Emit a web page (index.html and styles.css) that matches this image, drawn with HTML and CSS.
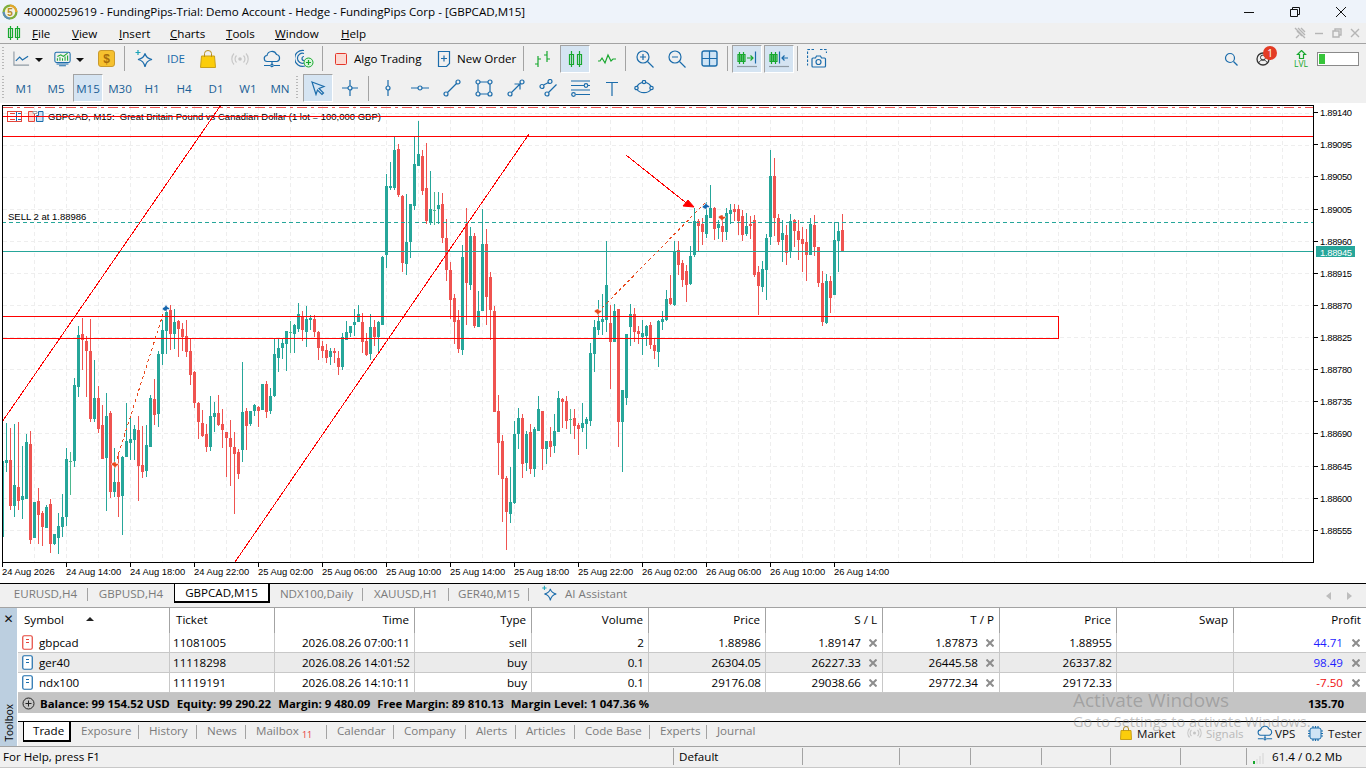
FILE: index.html
```html
<!DOCTYPE html>
<html lang="en">
<head>
    <meta charset="UTF-8">
    <title>40000259619 - FundingPips-Trial: Demo Account - Hedge - FundingPips Corp - [GBPCAD,M15]</title>
    <link rel="stylesheet" href="styles.css">
</head>
<body>
    <div class="title-bar">
        <svg class="app-logo" width="16" height="16" viewBox="0 0 16 16">
            <circle cx="8" cy="8" r="7.5" fill="#7fae3c"/>
            <path d="M8 .5A7.5 7.5 0 0 1 15.5 8L8 8z" fill="#e2a72e"/>
            <path d="M.5 8A7.5 7.5 0 0 0 8 15.5L8 8z" fill="#5b8fb5"/>
            <circle cx="8" cy="8" r="5.2" fill="#f4f1df"/>
            <text x="8" y="12" text-anchor="middle" class="logo-five">5</text>
        </svg>
        <span class="title-text">40000259619 - FundingPips-Trial: Demo Account - Hedge - FundingPips Corp - [GBPCAD,M15]</span>
        <div class="win-buttons">
            <svg width="12" height="12" viewBox="0 0 12 12"><path class="win-ic" d="M1 6.5h10"/></svg>
            <svg width="12" height="12" viewBox="0 0 12 12"><path class="win-ic" d="M1.5 3.5h7v7h-7zM3.5 3.5v-2h7v7h-2"/></svg>
            <svg width="12" height="12" viewBox="0 0 12 12"><path class="win-ic" d="M1 1l10 10M11 1L1 11"/></svg>
        </div>
    </div>

    <div class="menu-bar">
        <svg class="menu-logo" width="14" height="16" viewBox="0 0 14 16"><path class="ic-g" d="M3.5 1v14M10.5 1v14"/><path class="ic-g" d="M1.5 3.5h4v9h-4zM8.5 3.5h4v9h-4z"/></svg>
        <div class="menu-list">
            <span><u>F</u>ile</span>
            <span><u>V</u>iew</span>
            <span><u>I</u>nsert</span>
            <span><u>C</u>harts</span>
            <span><u>T</u>ools</span>
            <span><u>W</u>indow</span>
            <span><u>H</u>elp</span>
        </div>
        <div class="doc-buttons">
            <svg width="12" height="12" viewBox="0 0 12 12"><path class="doc-ic" d="M4 1l7 7M2 11l3-3M3 4l5 5M7 1l4 4M1 1l10 10"/></svg>
            <svg width="10" height="12" viewBox="0 0 10 12"><path class="doc-ic" d="M1 6.5h8"/></svg>
            <svg width="10" height="12" viewBox="0 0 10 12"><path class="doc-ic" d="M1 4h6v6H1zM3 4V2h6v6H7"/></svg>
            <svg width="10" height="12" viewBox="0 0 10 12"><path class="doc-ic" d="M1 2l8 8M9 2l-8 8"/></svg>
        </div>
    </div>

    <div class="toolbar">
        <span class="grip"></span>
        <button class="tb tb-caret">
            <svg width="18" height="18" viewBox="0 0 18 18"><path class="ic-gray" d="M1 1v14.5h16"/><path class="ic" d="M3 11l4-4 3 3 6-4"/></svg>
            <i class="caret"></i>
        </button>
        <button class="tb tb-caret">
            <svg width="20" height="20" viewBox="0 0 20 20"><rect class="ic" x="1" y="2" width="18" height="12" rx="2"/><path class="ic-g" d="M4 12V9M7 12V8M10 12V9M13 12V7M16 12V6M4 7l4-2 3 2 5-4"/><path class="ic" d="M3 16h14M6 18h8"/></svg>
            <i class="caret"></i>
        </button>
        <button class="tb">
            <svg width="17" height="17" viewBox="0 0 17 17"><rect x=".5" y=".5" width="16" height="16" rx="2.5" fill="#f6c12f" stroke="#c99a2e"/><text x="8.5" y="13" text-anchor="middle" class="dollar">$</text></svg>
        </button>
        <span class="sep"></span>
        <button class="tb">
            <svg width="20" height="20" viewBox="0 0 20 20"><path class="ic" d="M11 4.500c.8 3.4 2.800 5.200 7 6-4.200.8-6.200 2.800-7 7.500-.8-4.700-2.800-6.700-7-7.500 4.200-.8 6.200-2.600 7-6z"/><path class="ic-t" d="M4 1v5M1.500 3.500h5"/></svg>
        </button>
        <button class="tb tb-ide">IDE</button>
        <button class="tb">
            <svg width="16" height="18" viewBox="0 0 16 18"><path d="M1.500 6h13l1 11.500H.5z" fill="#fbcd0b" stroke="#c8a01a"/><path d="M4.500 7V3.500a3.500 3 0 0 1 7 0V7" fill="none" stroke="#b88f1c"/></svg>
        </button>
        <button class="tb">
            <svg width="18" height="12" viewBox="0 0 18 12"><circle cx="9" cy="6" r="1.800" fill="#c4c4c4"/><path class="ic-light" d="M5.500 2.500a5 5 0 0 0 0 7M12.500 2.500a5 5 0 0 1 0 7M3 .5a8 8 0 0 0 0 11M15 .5a8 8 0 0 1 0 11"/></svg>
        </button>
        <button class="tb">
            <svg width="18" height="18" viewBox="0 0 18 18"><path class="ic" d="M4.500 11.500a3 3 0 0 1-.5-6 5 5 0 0 1 9.500-1 3.600 3.600 0 0 1 .5 7z"/><path class="ic" d="M9 11.500v3M1 15.500h6M11 15.500h6"/><circle class="ic" cx="9" cy="15.500" r="1.200"/></svg>
        </button>
        <button class="tb">
            <svg width="19" height="19" viewBox="0 0 19 19"><path class="ic" d="M9 1.500a8 8 0 1 0 1 15.500M9 4.500a5 5 0 1 0 0 9.500M9 7.500a2 2 0 1 0 0 4"/><circle cx="13.500" cy="13.500" r="4.500" fill="#d9f5dc" stroke="#18a82f"/><path class="ic-g" d="M13.500 11v5M11 13.500h5"/></svg>
        </button>
        <span class="sep"></span>
        <button class="tb tb-text tb-algo">
            <svg width="12" height="12" viewBox="0 0 12 12"><rect x=".5" y=".5" width="11" height="11" rx="1" fill="#fbd9d2" stroke="#e5362a"/></svg>
            Algo Trading
        </button>
        <button class="tb tb-text tb-order">
            <svg width="14" height="16" viewBox="0 0 14 16"><path class="ic" d="M1.500.5h11v12l-3 3h-8z"/><path class="ic" d="M7 4.500v6M4 7.500h6"/></svg>
            New Order
        </button>
        <span class="sep"></span>
        <button class="tb">
            <svg width="18" height="18" viewBox="0 0 18 18"><path class="ic-g" d="M4 6v11M1 14h3M4 9h3M13 1v11M10 5h3M13 9h3"/></svg>
        </button>
        <button class="tb on">
            <svg width="15" height="18" viewBox="0 0 15 18"><path class="ic-g" d="M3.500 1v16M11.500 1v16M1.500 4.500h4v10h-4zM9.500 4.500h4v10h-4z"/></svg>
        </button>
        <button class="tb">
            <svg width="18" height="12" viewBox="0 0 18 12"><path class="ic-g" d="M0 8h2l2-3 3 5 3-8 3 6 2-2h3"/></svg>
        </button>
        <span class="sep"></span>
        <button class="tb">
            <svg width="18" height="18" viewBox="0 0 18 18"><circle class="ic" cx="7" cy="7" r="6"/><path class="ic" d="M11.500 11.500l6 6M4 7h6M7 4v6"/></svg>
        </button>
        <button class="tb">
            <svg width="18" height="18" viewBox="0 0 18 18"><circle class="ic" cx="7" cy="7" r="6"/><path class="ic" d="M11.500 11.500l6 6M4 7h6"/></svg>
        </button>
        <button class="tb">
            <svg width="17" height="17" viewBox="0 0 17 17"><rect x="1" y="1" width="15" height="15" rx="2" fill="#cfe4f5" stroke="#1b6cab" stroke-width="1.400"/><path class="ic" d="M8.500 1v15M1 8.500h15"/></svg>
        </button>
        <span class="sep"></span>
        <button class="tb on">
            <svg width="20" height="18" viewBox="0 0 20 18"><path class="ic-g" d="M2.500 2v12M6.500 2v12M1 4.500h3v7H1zM5 4.500h3v7H5zM10 8h6M13.500 5.500L16 8l-2.500 2.500"/><path class="ic" d="M18.500 1.500v12"/><path class="ic-gray" d="M0 16.500h20"/></svg>
        </button>
        <button class="tb on">
            <svg width="20" height="18" viewBox="0 0 20 18"><path class="ic-g" d="M2.500 2v12M6.500 2v12M1 4.500h3v7H1zM5 4.500h3v7H5z"/><path class="ic" d="M10.500 1.500v12M13 8h6M15.500 5.500L13 8l2.500 2.500"/><path class="ic-gray" d="M0 16.500h20"/></svg>
        </button>
        <span class="sep"></span>
        <button class="tb">
            <svg width="20" height="19" viewBox="0 0 20 19"><path class="ic ic-dash" d="M7 .5H1.500a1 1 0 0 0-1 1v15M13 .5h5.500a1 1 0 0 1 1 1V4"/><path class="ic" d="M6 9h2.500l1-2h4l1 2h3a1 1 0 0 1 1 1v7a1 1 0 0 1-1 1H6a1 1 0 0 1-1-1v-7a1 1 0 0 1 1-1z"/><circle class="ic" cx="11.500" cy="13" r="2.500"/></svg>
        </button>

        <div class="tray">
            <svg width="14" height="14" viewBox="0 0 14 14"><circle class="ic" cx="6" cy="6" r="4.500"/><path class="ic" d="M9.500 9.500l4 4"/></svg>
            <div class="user">
                <svg width="14" height="14" viewBox="0 0 14 14"><circle cx="7" cy="7" r="6" fill="none" stroke="#333" stroke-width="1.300"/><circle cx="7" cy="5.500" r="2.500" fill="none" stroke="#333"/><path d="M2.500 11c1-2 2.500-3 4.500-3s3.500 1 4.500 3" fill="none" stroke="#333"/></svg>
                <span class="badge">1</span>
            </div>
            <div class="lvl">
                <svg width="11" height="9" viewBox="0 0 11 9"><path class="ic-g" d="M5.500 .5l4 4H7.500V8.500h-4V4.500H1.500z"/></svg>
                <span>LVL</span>
            </div>
            <div class="level-bar"><span class="level-fill"></span></div>
        </div>
    </div>

    <div class="toolbar toolbar-two">
        <span class="grip"></span>
        <button class="tb tf">M1</button>
        <button class="tb tf">M5</button>
        <button class="tb tf on">M15</button>
        <button class="tb tf">M30</button>
        <button class="tb tf">H1</button>
        <button class="tb tf">H4</button>
        <button class="tb tf">D1</button>
        <button class="tb tf">W1</button>
        <button class="tb tf">MN</button>
        <span class="grip"></span>
        <button class="tb on">
            <svg width="16" height="16" viewBox="0 0 16 16"><path class="ic" d="M2 2l12 4.500-5 2 4.500 4.500-1.500 1.500L7.500 10l-1.500 4.500z"/></svg>
        </button>
        <button class="tb">
            <svg width="18" height="18" viewBox="0 0 18 18"><circle class="ic" cx="9" cy="9" r="2"/><path class="ic" d="M9 1v6M9 11v6M1 9h6M11 9h6"/></svg>
        </button>
        <span class="sep"></span>
        <button class="tb">
            <svg width="8" height="18" viewBox="0 0 8 18"><circle class="ic" cx="4" cy="9" r="2"/><path class="ic" d="M4 1v6M4 11v6"/></svg>
        </button>
        <button class="tb">
            <svg width="18" height="8" viewBox="0 0 18 8"><circle class="ic" cx="9" cy="4" r="2"/><path class="ic" d="M0 4h7M11 4h7"/></svg>
        </button>
        <button class="tb">
            <svg width="18" height="18" viewBox="0 0 18 18"><circle class="ic" cx="3" cy="15" r="2"/><circle class="ic" cx="15" cy="3" r="2"/><path class="ic" d="M4.500 13.500l9-9"/></svg>
        </button>
        <button class="tb">
            <svg width="18" height="18" viewBox="0 0 18 18"><circle class="ic" cx="3" cy="3" r="2"/><circle class="ic" cx="15" cy="3" r="2"/><circle class="ic" cx="3" cy="15" r="2"/><circle class="ic" cx="15" cy="15" r="2"/><path class="ic" d="M5 3h8M5 15h8M3 5v8M15 5v8"/></svg>
        </button>
        <button class="tb">
            <svg width="18" height="18" viewBox="0 0 18 18"><circle class="ic" cx="3" cy="15" r="2"/><circle class="ic" cx="15" cy="3" r="2"/><path class="ic" d="M4.500 13.500l9-9M7.500 5h5.500v5.500"/></svg>
        </button>
        <button class="tb">
            <svg width="19" height="18" viewBox="0 0 19 18"><circle class="ic" cx="3" cy="7.500" r="2"/><circle class="ic" cx="11" cy="2.500" r="2"/><circle class="ic" cx="8" cy="15" r="2"/><path class="ic" d="M4.500 6l5-2.500M9.500 13.500l8-8"/></svg>
        </button>
        <button class="tb">
            <svg width="19" height="18" viewBox="0 0 19 18"><path class="ic" d="M0 2h19M0 6.500h13M17 6.500h2M0 11h19M5 15.500h14"/><circle class="ic" cx="15" cy="6.500" r="1.800"/><circle class="ic" cx="2.500" cy="15.500" r="1.800"/></svg>
        </button>
        <button class="tb">
            <svg width="14" height="15" viewBox="0 0 14 15"><path class="ic" d="M1 1.500h12M7 1.500V15"/></svg>
        </button>
        <button class="tb">
            <svg width="20" height="16" viewBox="0 0 20 16"><path class="ic" d="M3 6.500a8 6 0 0 1 5-4M12 2.500a8 6 0 0 1 5 4M17 9.500a8 6 0 0 1-14 0"/><circle class="ic" cx="10" cy="2" r="1.700"/><circle class="ic" cx="2.500" cy="8" r="1.700"/><circle class="ic" cx="17.500" cy="8" r="1.700"/></svg>
        </button>
    </div>

    <div class="chart-area">
        <svg id="chart" class="chart" width="1366" height="480" viewBox="0 103 1366 480">
            <defs>
                <clipPath id="plot"><rect x="3" y="106" width="1310" height="456"/></clipPath>
            </defs>
            <g id="grid" class="grid"></g>
            <g class="legend">
                <text x="48" y="120">GBPCAD, M15:  Great Britain Pound vs Canadian Dollar (1 lot = 100,000 GBP)</text>
                <text x="8" y="220">SELL 2 at 1.88986</text>
            </g>
            <g class="legend-icons">
                <rect x="7.500" y="111.500" width="14" height="10" fill="#fff" stroke="#e5453a"/>
                <path d="M10 113.500h5M10 116.500h5M10 119.500h5" stroke="#e5453a"/>
                <path d="M16.500 112v9M18 113.500h3M18 116.500h3M18 119.500h3" stroke="#1b6cab"/>
                <path d="M28.500 111.500h5l1 2v8h-6z" fill="#fbd9d2" stroke="#e5453a"/>
                <path d="M36.500 115.500h2v-4h4.500v10h-6.500z" fill="#cfe4f5" stroke="#1b6cab"/>
                <path d="M33 111.500h4v2h-4z" fill="#fff" stroke="#a0a0a0"/>
            </g>
            <g id="candles" clip-path="url(#plot)"></g>
            <g id="objects" clip-path="url(#plot)"></g>
            <g id="markers"></g>
            <path class="frame" d="M2.500 105.500H1313.500V562.500H2.500z"/>
            <g id="ticks" class="frame"></g>
            <g class="axis price-axis">
                <text x="1320" y="116">1.89140</text>
                <text x="1320" y="148">1.89095</text>
                <text x="1320" y="180">1.89050</text>
                <text x="1320" y="213">1.89005</text>
                <text x="1320" y="245">1.88960</text>
                <text x="1320" y="277">1.88915</text>
                <text x="1320" y="309">1.88870</text>
                <text x="1320" y="341">1.88825</text>
                <text x="1320" y="373">1.88780</text>
                <text x="1320" y="405">1.88735</text>
                <text x="1320" y="437">1.88690</text>
                <text x="1320" y="470">1.88645</text>
                <text x="1320" y="502">1.88600</text>
                <text x="1320" y="534">1.88555</text>
                <rect class="bid-box" x="1316" y="246" width="39" height="11"/>
                <text class="bid-text" x="1320" y="256">1.88945</text>
            </g>
            <g class="axis">
                <text x="2" y="575">24 Aug 2026</text>
                <text x="66" y="575">24 Aug 14:00</text>
                <text x="130" y="575">24 Aug 18:00</text>
                <text x="194" y="575">24 Aug 22:00</text>
                <text x="258" y="575">25 Aug 02:00</text>
                <text x="322" y="575">25 Aug 06:00</text>
                <text x="386" y="575">25 Aug 10:00</text>
                <text x="450" y="575">25 Aug 14:00</text>
                <text x="514" y="575">25 Aug 18:00</text>
                <text x="578" y="575">25 Aug 22:00</text>
                <text x="642" y="575">26 Aug 02:00</text>
                <text x="706" y="575">26 Aug 06:00</text>
                <text x="770" y="575">26 Aug 10:00</text>
                <text x="834" y="575">26 Aug 14:00</text>
            </g>
        </svg>
    </div>

    <div class="chart-tabs">
        <span class="chart-tab">EURUSD,H4</span>
        <span class="chart-tab no-sep">GBPUSD,H4</span>
        <span class="chart-tab active">GBPCAD,M15</span>
        <span class="chart-tab">NDX100,Daily</span>
        <span class="chart-tab">XAUUSD,H1</span>
        <span class="chart-tab">GER40,M15</span>
        <span class="chart-tab no-sep ai-tab">
            <svg width="17" height="17" viewBox="0 0 20 20"><path class="ic" d="M11 4.500c.8 3.400 2.800 5.200 7 6-4.200.8-6.200 2.800-7 7.500-.8-4.700-2.800-6.700-7-7.500 4.200-.8 6.200-2.600 7-6z"/><path class="ic-t" d="M4 1v5M1.500 3.500h5"/></svg>
            AI Assistant
        </span>
        <div class="tab-arrows">
            <svg width="5" height="8" viewBox="0 0 5 8"><path d="M5 0v8L0 4z"/></svg>
            <svg width="5" height="8" viewBox="0 0 5 8"><path d="M0 0v8l5-4z"/></svg>
        </div>
    </div>

    <svg class="defs" width="0" height="0">
        <symbol id="close-x" viewBox="0 0 8 8"><path d="M.5.5l7 7M7.500.5l-7 7" stroke="#8d8d8d" stroke-width="2" fill="none"/></symbol>
        <symbol id="pos-sell" viewBox="0 0 11 15"><rect x=".75" y=".75" width="9.500" height="13.500" rx="1.500" fill="#fff" stroke="#e5453a" stroke-width="1.200"/><path d="M4 4.500h3M4 7.500h3" stroke="#e5453a"/></symbol>
        <symbol id="pos-buy" viewBox="0 0 11 15"><rect x=".75" y=".75" width="9.500" height="13.500" rx="1.500" fill="#fff" stroke="#1b6cab" stroke-width="1.200"/><path d="M4 4.500h3M4 7.500h3" stroke="#1b6cab"/></symbol>
    </svg>

    <div class="toolbox">
        <div class="toolbox-strip">
            <span class="strip-x">✕</span>
            <span class="strip-label">Toolbox</span>
        </div>
        <div class="toolbox-main">
            <div class="row head">
                <span class="left">Symbol<i class="sort"></i></span>
                <span class="left">Ticket</span>
                <span>Time</span><span>Type</span><span>Volume</span><span>Price</span>
                <span>S / L</span><span>T / P</span><span>Price</span><span>Swap</span><span>Profit</span>
            </div>
            <div class="row">
                <span class="sym"><svg width="11" height="15"><use href="#pos-sell"/></svg>gbpcad</span>
                <span class="ticket">11081005</span>
                <span>2026.08.26 07:00:11</span><span>sell</span><span>2</span><span>1.88986</span>
                <span>1.89147<svg class="x"><use href="#close-x"/></svg></span>
                <span>1.87873<svg class="x"><use href="#close-x"/></svg></span>
                <span>1.88955</span><span></span>
                <span class="pos-val">44.71<svg class="x"><use href="#close-x"/></svg></span>
            </div>
            <div class="row alt">
                <span class="sym"><svg width="11" height="15"><use href="#pos-buy"/></svg>ger40</span>
                <span class="ticket">11118298</span>
                <span>2026.08.26 14:01:52</span><span>buy</span><span>0.1</span><span>26304.05</span>
                <span>26227.33<svg class="x"><use href="#close-x"/></svg></span>
                <span>26445.58<svg class="x"><use href="#close-x"/></svg></span>
                <span>26337.82</span><span></span>
                <span class="pos-val">98.49<svg class="x"><use href="#close-x"/></svg></span>
            </div>
            <div class="row">
                <span class="sym"><svg width="11" height="15"><use href="#pos-buy"/></svg>ndx100</span>
                <span class="ticket">11119191</span>
                <span>2026.08.26 14:10:11</span><span>buy</span><span>0.1</span><span>29176.08</span>
                <span>29038.66<svg class="x"><use href="#close-x"/></svg></span>
                <span>29772.34<svg class="x"><use href="#close-x"/></svg></span>
                <span>29172.33</span><span></span>
                <span class="neg-val">-7.50<svg class="x"><use href="#close-x"/></svg></span>
            </div>
            <div class="summary">
                <svg width="13" height="13" viewBox="0 0 13 13"><circle cx="6.500" cy="6.500" r="5.500" fill="none" stroke="#222"/><path d="M3.500 6.500h6M6.500 3.500v6" stroke="#222"/></svg>
                <b>Balance: 99 154.52 USD</b>
                <b>Equity: 99 290.22</b>
                <b>Margin: 9 480.09</b>
                <b>Free Margin: 89 810.13</b>
                <b>Margin Level: 1 047.36 %</b>
                <b class="total">135.70</b>
            </div>
            <div class="bottom-tabs">
                <span class="bottom-tab active">Trade</span>
                <span class="bottom-tab">Exposure</span>
                <span class="bottom-tab">History</span>
                <span class="bottom-tab">News</span>
                <span class="bottom-tab">Mailbox<sub>11</sub></span>
                <span class="bottom-tab">Calendar</span>
                <span class="bottom-tab">Company</span>
                <span class="bottom-tab">Alerts</span>
                <span class="bottom-tab">Articles</span>
                <span class="bottom-tab">Code Base</span>
                <span class="bottom-tab">Experts</span>
                <span class="bottom-tab no-sep">Journal</span>
                <div class="tools-right">
                    <span class="tool-link">
                        <svg width="12" height="14" viewBox="0 0 12 14"><path d="M1 4.500h10l.5 9H.5z" fill="#fbcd0b" stroke="#c8a01a"/><path d="M3.500 5V3a2.500 2.500 0 0 1 5 0v2" fill="none" stroke="#b88f1c"/></svg>
                        Market
                    </span>
                    <span class="tool-link muted">
                        <svg width="15" height="10" viewBox="0 0 15 10"><circle cx="7.500" cy="5" r="1.500" fill="#c4c4c4"/><path class="ic-light" d="M4.500 2a4 4 0 0 0 0 6M10.500 2a4 4 0 0 1 0 6M2.500 .5a7 7 0 0 0 0 9M12.500 .5a7 7 0 0 1 0 9"/></svg>
                        Signals
                    </span>
                    <span class="tool-link tool-vps">
                        <svg width="18" height="16" viewBox="0 0 18 18"><path class="ic" d="M4.500 11.500a3 3 0 0 1-.5-6 5 5 0 0 1 9.500-1 3.600 3.600 0 0 1 .5 7z"/><path class="ic" d="M9 11.500v3M1 15.500h6M11 15.500h6"/><circle class="ic" cx="9" cy="15.500" r="1.200"/></svg>
                        VPS
                    </span>
                    <span class="tool-link">
                        <svg width="15" height="15" viewBox="0 0 15 15"><rect x="2" y="2" width="11" height="11" rx="2" fill="#cfe4f5" stroke="#1b6cab"/><path class="ic" d="M5 0v2M7.500 0v2M10 0v2M5 13v2M7.500 13v2M10 13v2M0 5h2M0 7.500h2M0 10h2M13 5h2M13 7.500h2M13 10h2"/></svg>
                        Tester
                    </span>
                </div>
            </div>
        </div>
    </div>

    <div class="status-bar">
        <span>For Help, press F1</span>
        <span class="with-line">Default</span>
        <span class="with-line"></span>
        <span class="with-line"></span>
        <span class="with-line"></span>
        <span class="with-line"></span>
        <span class="with-line"></span>
        <span class="with-line"></span>
        <span class="with-line conn">
            <svg width="14" height="14" viewBox="0 0 14 14">
                <path d="M1 11h2v3H1z" fill="#19a82f"/>
                <path d="M4 9h2v5H4zM7 6h2v8H7zM10 3h2v11h-2z" fill="#e2e2e2"/>
            </svg>
            61.4 / 0.2 Mb
        </span>
    </div>

    <div class="watermark">
        <div class="wm-big">Activate Windows</div>
        <div class="wm-small">Go to Settings to activate Windows.</div>
    </div>

    <script src="chart.js"></script>
</body>
</html>
```

FILE: styles.css
```css
* {
    margin: 0;
    padding: 0;
    box-sizing: border-box;
}

body {
    width: 1366px;
    height: 768px;
    overflow: hidden;
    position: relative;
    background: #f0f0f0;
    color: #000;
    font-family: "Open Sans", "Noto Sans", sans-serif;
    font-size: 11.6px;
    display: flex;
    flex-direction: column;
}

/* title + menu */
.title-bar {
    height: 23px;
    background: #eef3fa;
    display: flex;
    align-items: center;
    padding-left: 2px;
    flex: none;
}

.app-logo {
    flex: none;
}

.logo-five {
    font: bold 10px "Liberation Sans", sans-serif;
    fill: #b98a1e;
}

.title-text {
    margin-left: 6px;
    white-space: nowrap;
}

.win-buttons {
    margin-left: auto;
    display: flex;
    gap: 34px;
    padding-right: 19px;
}

.win-ic {
    fill: none;
    stroke: #111;
}

.menu-bar {
    height: 21px;
    display: flex;
    align-items: center;
    padding-left: 7px;
    border-bottom: 1px solid #a3a3a3;
    flex: none;
}

.menu-logo {
    margin-right: 11px;
}

.menu-list {
    display: grid;
    grid-template-columns: 40px 47px 51px 56px 49px 66px auto;
}

.doc-buttons {
    margin-left: auto;
    display: flex;
    gap: 8px;
    padding-right: 6px;
}

.doc-ic {
    fill: none;
    stroke: #b5b5b5;
    stroke-width: 1.400;
}

/* toolbars */
.toolbar {
    height: 29px;
    display: flex;
    align-items: center;
    padding-left: 2px;
    flex: none;
}

.toolbar-two {
    height: 30px;
}

.grip {
    width: 2px;
    height: 24px;
    margin-right: 4px;
    flex: none;
    background: repeating-linear-gradient(to bottom, #b8b8b8 0 1px, transparent 1px 3px);
}

.tb {
    width: 32px;
    height: 28px;
    flex: none;
    border: 1px solid transparent;
    background: none;
    display: flex;
    align-items: center;
    justify-content: center;
    font: inherit;
    color: #000;
}

.tb.on {
    background: #d5e4f2;
    border-color: #a3a3a3 #fff #fff #a3a3a3;
    width: 30px;
    margin: 0 1px;
}

.tb-caret {
    width: 36px;
    gap: 5px;
    justify-content: flex-start;
    padding-left: 4px;
}

.tb-caret + .tb-caret {
    margin-left: 4px;
}

.tb-caret + .tb {
    margin-left: 5px;
}

.caret {
    width: 0;
    height: 0;
    border-left: 4px solid transparent;
    border-right: 4px solid transparent;
    border-top: 4px solid #111;
    margin-top: 2px;
}

.tb-ide {
    color: #1b6cab;
}

.tb-text {
    width: auto;
    gap: 6px;
    justify-content: flex-start;
}

.tb-algo {
    width: 103px;
    padding-left: 8px;
    gap: 7px;
}

.tb-order {
    width: 92px;
    padding-left: 7px;
}

.tf {
    color: #1b5f96;
}

.sep {
    width: 1px;
    height: 25px;
    margin: 0 3px 0 2px;
    flex: none;
    background: #a3a3a3;
}

.tray {
    margin-left: auto;
    display: flex;
    align-items: center;
    padding-right: 7px;
}

.user {
    position: relative;
    width: 14px;
    height: 14px;
    margin-left: 18px;
}

.badge {
    position: absolute;
    left: 7px;
    top: -6px;
    width: 14px;
    height: 14px;
    border-radius: 50%;
    background: #e33b24;
    color: #fff;
    font-size: 10px;
    line-height: 14px;
    text-align: center;
}

.lvl {
    margin-left: 24px;
    display: flex;
    flex-direction: column;
    align-items: center;
    color: #16a82e;
    font-size: 8.500px;
    line-height: 9px;
    width: 14px;
}

.level-bar {
    margin-left: 9px;
    width: 42px;
    height: 14px;
    background: #fff;
    border: 1px solid #8a8a8a;
    padding: 1px;
}

.level-fill {
    display: block;
    width: 6px;
    height: 100%;
    background: #37c53a;
}

/* icon strokes */
.ic, .ic-g, .ic-t, .ic-gray, .ic-light {
    fill: none;
    stroke-width: 1.200;
}

.ic { stroke: #1b6cab; }
.ic-g { stroke: #18a82f; }
.ic-t { stroke: #1aa3b8; }
.ic-gray { stroke: #8f9aa3; }
.ic-light { stroke: #c8c8c8; }
.ic-dash { stroke-dasharray: 2.500 1.500; }

.dollar {
    font: bold 12px "Liberation Sans", sans-serif;
    fill: #a66c0c;
}

/* chart */
.chart-area {
    height: 480px;
    background: #fff;
    flex: none;
}

.chart {
    display: block;
}

.legend text {
    font: 9.500px "Liberation Sans", sans-serif;
    fill: #000;
    white-space: pre;
}

.frame {
    fill: none;
    stroke: #000;
    shape-rendering: crispEdges;
}

.axis text {
    font: 9.400px "Liberation Sans", sans-serif;
    fill: #000;
}

.price-axis text {
    letter-spacing: -0.3px;
}

.axis .bid-box {
    fill: #26a69a;
}

.axis .bid-text {
    fill: #fff;
}

/* chart tabs */
.chart-tabs {
    height: 25px;
    flex: none;
    border-top: 1px solid #000;
    border-bottom: 1px solid #a3a3a3;
    display: grid;
    grid-template-columns: 85px 86px 96px 93px 86px 80px 120px 1fr;
    padding-left: 3px;
    color: #7b7b7b;
    position: relative;
}

.chart-tab {
    height: 19px;
    display: flex;
    align-items: center;
    justify-content: center;
    white-space: nowrap;
    position: relative;
}

.chart-tab::after {
    content: "";
    position: absolute;
    right: 0;
    top: 4px;
    height: 13px;
    width: 1px;
    background: #a3a3a3;
}

.chart-tab.no-sep::after,
.bottom-tab.no-sep::after {
    display: none;
}

.chart-tab.active {
    background: #fff;
    color: #000;
    border: solid #000;
    border-width: 0 2px 2px 1px;
}

.chart-tab.active::after {
    display: none;
}

.ai-tab {
    justify-content: flex-start;
    gap: 7px;
    padding-left: 12px;
}

.tab-arrows {
    display: flex;
    justify-content: flex-end;
    gap: 16px;
    padding: 8px 14px 0 0;
    fill: #bdbdbd;
}

/* toolbox */
.toolbox {
    height: 139px;
    flex: none;
    display: flex;
    border-bottom: 1px solid #a3a3a3;
}

.toolbox-strip {
    width: 18px;
    background: #bccfe0;
    border-right: 1px solid #fff;
    display: flex;
    flex-direction: column;
    justify-content: space-between;
    align-items: center;
    padding: 4px 0 5px;
}

.strip-x {
    font: bold 12px "DejaVu Sans", sans-serif;
    color: #111;
}

.strip-label {
    writing-mode: vertical-rl;
    transform: rotate(180deg);
    line-height: 14px;
    font-size: 10px;
}

.toolbox-main {
    flex: 1;
    background: #fff;
    display: flex;
    flex-direction: column;
}

.row {
    height: 20px;
    display: grid;
    grid-template-columns: 152px 105px 140px repeat(7, 117px) 1fr;
    align-items: stretch;
    border-bottom: 1px solid #c8c8c8;
    flex: none;
}

.row > span {
    border-right: 1px solid #c8c8c8;
    text-align: right;
    padding-right: 4px;
    line-height: 19px;
    white-space: nowrap;
}

.row > span:last-child {
    border-right: none;
    padding-right: 5px;
}

.row.alt {
    background: #ebebeb;
}

.row.head {
    height: 25px;
    background: #fff;
    border-bottom: none;
}

.row.head > span {
    border-right-color: #a3a3a3;
    line-height: 24px;
    padding-right: 5px;
}

.row.head > .left {
    text-align: left;
    padding-left: 6px;
}

.sort {
    display: inline-block;
    border-left: 4px solid transparent;
    border-right: 4px solid transparent;
    border-bottom: 4px solid #222;
    margin-left: 22px;
    vertical-align: 3px;
}

.row > .sym {
    text-align: left;
    display: flex;
    align-items: center;
    gap: 6px;
    padding-left: 4px;
}

.row > .ticket {
    text-align: left;
    padding-left: 3px;
}

.x {
    width: 8px;
    height: 8px;
    margin: 0 1px 0 8px;
}

.pos-val .x, .neg-val .x {
    margin-left: 9px;
}

.pos-val { color: #1f1fff; }
.neg-val { color: #f01010; }

.summary {
    height: 20px;
    flex: none;
    background: #c4c4c4;
    display: flex;
    align-items: center;
    gap: 7px;
    padding-left: 4px;
    margin-bottom: 8px;
    white-space: nowrap;
    font-size: 11.450px;
}

.summary svg {
    margin-right: -2px;
}

.total {
    margin-left: auto;
    padding-right: 22px;
}

.bottom-tabs {
    flex: 1;
    border-top: 1px solid #000;
    background: #f0f0f0;
    display: grid;
    grid-template-columns: 48px 68px 58px 49px 81px 67px 72px 50px 59px 75px 57px 1fr 246px;
    padding-left: 5px;
    color: #7b7b7b;
}

.bottom-tab {
    height: 20px;
    padding-left: 10px;
    line-height: 18px;
    position: relative;
    white-space: nowrap;
}

.bottom-tab::after {
    content: "";
    position: absolute;
    right: 0;
    top: 3px;
    height: 14px;
    width: 1px;
    background: #a3a3a3;
}

.bottom-tab sub {
    color: #e83a3a;
    font-size: 9px;
    margin-left: 3px;
}

.bottom-tab.active {
    background: #fff;
    color: #000;
    border: solid #000;
    border-width: 0 2px 2px 1px;
    padding-left: 9px;
}

.bottom-tab.active::after {
    display: none;
}

.tools-right {
    display: grid;
    grid-template-columns: 67px 69px 52px 58px;
    color: #111;
    align-items: center;
    height: 22px;
}

.tool-link {
    display: flex;
    align-items: center;
    gap: 5px;
    white-space: nowrap;
}

.tool-vps {
    gap: 1px;
}

.tool-link.muted {
    color: #b9b9b9;
    gap: 4px;
}

/* status bar */
.status-bar {
    height: 21px;
    flex: none;
    display: grid;
    grid-template-columns: 673px 129px 97px 71px 71px 69px 70px 66px 1fr;
    align-items: center;
    border-bottom: 1px solid #c8c8c8;
    padding-bottom: 1px;
}

.status-bar > span {
    padding-left: 3px;
    height: 17px;
    line-height: 17px;
}

.status-bar > .with-line {
    border-left: 1px solid #a3a3a3;
    padding-left: 5px;
}

.conn {
    display: flex;
    align-items: center;
    gap: 6px;
}

/* windows watermark over everything */
.watermark {
    position: absolute;
    left: 1073px;
    top: 688px;
    color: rgba(120, 120, 120, 0.45);
    pointer-events: none;
    white-space: nowrap;
}

.wm-big {
    font-size: 19px;
    line-height: 25px;
}

.wm-small {
    font-size: 14.500px;
    line-height: 18px;
}

.defs {
    position: absolute;
}
```

FILE: chart.js
```js
// candles per chart column, read in groups: [kind, high, bodyTop, bodyBottom, low]
// kind 1 = up (teal), 0 = down (red), 2 = doji. y values are thirds of a pixel from the group's top.
var groups = [
    { top: 300, rows: [
        [1,484,484,712,712],[1,370,480,490,515],[0,385,480,618,630],[1,372,555,618,650],[0,366,561,604,630],
        [1,438,588,600,657],[1,402,426,597,597],[0,393,432,720,732],[1,606,606,714,714],[0,564,603,645,732],
        [0,633,639,681,738],[1,615,621,684,684],[0,597,612,732,759],[1,702,702,732,735],[1,640,678,714,762],
        [1,582,651,681,711],[1,444,477,651,678],[2,456,484,485,585],[1,234,255,483,500],[1,78,105,261,291],
        [0,54,102,120,210],[0,108,123,153,291],[0,56,153,357,366],[1,180,294,357,366],[0,258,294,387,399],
        [0,315,375,477,477],[1,279,348,474,633],[0,333,339,576,594],[1,444,546,576,591],[0,459,546,591,651],
        [1,468,471,588,705],[1,309,423,471,471],[1,355,417,429,480],[1,375,387,420,480],[0,348,390,498,603],
        [0,378,495,516,534],[1,375,435,513,531],[1,285,294,441,441],[0,237,297,345,375],[1,153,162,342,381],
        [1,60,90,162,195],[1,18,36,93,162],[0,15,30,102,150],[1,27,66,102,147],[0,60,63,87,171],
        [0,69,87,111,153],[0,60,108,156,171],[0,117,153,225,255],[0,213,216,309,324],[0,306,309,366,417],
        [0,330,369,408,411],[0,372,402,441,456],[1,288,348,441,453],[1,306,339,351,396],[0,285,339,375,378],
        [0,327,372,390,444],[0,396,396,414,531],[0,360,414,441,558],[0,396,441,462,642],[0,447,456,522,537],
        [1,186,336,450,486],[0,325,333,378,450],[1,333,333,372,378],[1,312,315,333,348],[0,318,321,333,381],
        [1,252,252,330,330],[0,242,252,336,354],[1,264,288,333,342],[1,117,162,288,291],[1,117,144,174,216],
        [1,117,129,144,177],[1,93,93,132,213],[2,63,97,98,159],[1,72,75,102,159],[1,9,42,87,96]
    ]},
    { top: 105, rows: [
        [0,618,636,675,708],[1,603,642,681,726],[1,630,639,645,675],[0,630,642,681,696],[0,678,681,729,765],
        [0,708,723,738,759],[0,717,735,759,774],[1,729,738,756,780],[0,729,738,744,774],[0,738,759,786,810],
        [1,684,696,786,795],[1,648,681,705,705],[1,663,663,684,696],[1,612,651,660,693],[1,600,627,651,651],
        [0,624,651,711,744],[0,684,708,750,753],[1,627,666,747,765],[0,645,666,696,723],[1,648,651,696,744],
        [1,453,456,660,660],[1,207,243,450,489],[1,171,243,249,255],[1,96,135,249,255],[0,117,132,270,276],
        [0,270,273,474,501],[1,267,411,477,510],[1,297,297,411,459],[1,96,177,303,315],[1,48,147,183,183],
        [0,135,153,258,270],[0,114,249,348,357],[1,198,312,351,360],[2,261,315,317,360],[1,261,300,312,357],
        [0,264,297,399,414],[0,342,399,495,528],[0,471,495,585,642],[0,567,579,651,717],[0,615,645,732,744],
        [1,420,456,735,750],[0,309,357,534,660],[1,366,393,540,555],[0,384,393,663,669],[1,558,618,666,666],
        [1,312,417,618,618],[0,372,417,576,660],[0,501,516,615,705],[0,603,618,920,920]
    ]},
    { top: 330, rows: [
        [0,195,243,339,435],[0,315,333,447,576],[0,438,444,546,660],[1,411,516,552,579],[1,273,312,520,522],
        [1,234,264,312,357],[0,252,264,402,444],[1,303,312,399,423],[0,282,306,417,432],[1,291,297,417,441],
        [1,198,237,303,303],[0,243,243,357,420],[1,333,333,357,402],[0,291,333,351,381],[1,252,303,348,369],
        [1,183,204,306,306],[0,204,207,216,294],[0,198,213,273,297],[2,237,267,269,312],[0,237,264,288,327],
        [0,279,285,297,375],[1,219,279,294,306],[1,261,267,282,357]
    ]},
    { top: 130, rows: [
        [1,640,669,873,889],[1,570,591,672,726],[1,510,573,600,615],[1,492,567,576,615],[1,333,465,570,606],
        [0,525,579,636,777],[1,522,543,636,636],[0,537,537,876,951],[1,780,780,876,1026],[1,612,612,804,825],
        [1,522,552,591,648],[0,534,552,606,636],[0,588,603,612,642],[1,570,609,621,675],[1,585,588,618,648],
        [0,576,585,645,657],[0,627,645,663,687],[1,570,573,666,711],[1,543,567,576,600],[1,480,507,570,573],
        [0,435,504,522,525],[1,333,363,525,528],[0,333,360,405,435],[0,390,399,450,471],[0,405,423,465,516],
        [1,348,378,462,465],[1,234,273,375,381],[0,267,273,288,366],[0,264,282,306,345],[1,216,255,312,324],
        [1,165,234,264,264],[0,231,234,297,330],[1,270,282,294,327],[0,255,288,306,336],[1,234,249,306,330],
        [1,222,240,252,282],[0,222,237,246,273],[0,225,237,273,315],[0,240,258,315,333],[1,249,288,312,318],
        [0,258,282,288,327],[0,255,270,435,441],[0,408,426,468,555],[1,393,417,471,486],[1,312,324,420,510],
        [1,60,138,321,345],[0,84,138,264,318],[0,252,264,336,345],[1,270,309,330,396],[0,285,315,369,405],
        [1,252,273,366,384],[0,267,270,303,351],[0,270,303,330,390],[0,291,327,342,426],[0,297,336,375,453],
        [1,264,282,375,375],[0,255,285,351,378],[0,351,351,459,471],[0,423,459,576,588],[1,432,453,579,582],
        [0,438,453,504,549],[1,276,330,495,495],[1,276,303,333,426],[0,252,300,366,366]
    ]}
];

var NS = 'http://www.w3.org/2000/svg';
var COLORS = ['#ef5350', '#26a69a', '#4db88f'];
var RED = '#ff0000';
var GRID = '#eeeeee';

function add(parent, tag, attrs) {
    var el = document.createElementNS(NS, tag);
    for (var key in attrs) el.setAttribute(key, attrs[key]);
    parent.appendChild(el);
    return el;
}

function pxRect(parent, x, y1, w, y2, fill) {
    var top = Math.round(y1);
    var h = Math.max(1, Math.round(y2) - top);
    add(parent, 'rect', { x: x, y: top, width: w, height: h, fill: fill, 'shape-rendering': 'crispEdges' });
}

function line(parent, x1, y1, x2, y2, stroke, extra) {
    var attrs = { x1: x1, y1: y1, x2: x2, y2: y2, stroke: stroke, 'shape-rendering': 'crispEdges' };
    for (var key in extra) attrs[key] = extra[key];
    add(parent, 'line', attrs);
}

// grid
var grid = document.getElementById('grid');
var gridDash = { 'stroke-dasharray': '4 3' };
for (var gx = 34; gx < 1313; gx += 32) line(grid, gx + 0.5, 106, gx + 0.5, 562, GRID, gridDash);
[113, 145, 177, 209, 241, 273, 305, 337, 369, 401, 433, 466, 498, 530].forEach(function (gy) {
    line(grid, 3, gy + 0.5, 1313, gy + 0.5, GRID, gridDash);
});

// candles, 4px per bar starting at column 2
var candles = document.getElementById('candles');
var col = 2;
groups.forEach(function (group) {
    group.rows.forEach(function (c) {
        var color = COLORS[c[0]];
        var y = function (v) { return group.top + v / 3; };
        pxRect(candles, col, y(c[1]), 1, y(c[4]), color);
        if (c[0] === 2) {
            pxRect(candles, col - 1, y(c[2]), 3, y(c[2]) + 1, color);
        } else {
            pxRect(candles, col - 1, y(c[2]), 3, y(c[3]), color);
        }
        col += 4;
    });
});

// drawn objects
var objects = document.getElementById('objects');
line(objects, 3, 107.5, 1313, 107.5, '#ef5350', { 'stroke-dasharray': '10 4 3 4' });
line(objects, 2, 116.5, 1313, 116.5, RED);
line(objects, 2, 136.5, 1313, 136.5, RED);
line(objects, 2, 316.5, 1058.5, 316.5, RED);
line(objects, 2, 338.5, 1058.5, 338.5, RED);
line(objects, 1058.5, 316, 1058.5, 339, RED);
line(objects, 2, 222.5, 1313, 222.5, '#26a69a', { 'stroke-dasharray': '4 3' });
line(objects, 2, 251.5, 1313, 251.5, '#26a69a');
line(objects, 2, 422, 221, 105, RED);
line(objects, 235, 562, 529, 134, RED);
line(objects, 626, 155, 690, 206, RED);
add(objects, 'polygon', { points: '683,206 688,200 694,207', fill: RED, stroke: RED });

// trade history
var markers = document.getElementById('markers');
var TRADE = '#e8491d';
var BLUE = '#1565ad';
line(markers, 115, 465, 165, 308, TRADE, { 'stroke-dasharray': '3 3' });
line(markers, 598, 312, 706, 202, TRADE, { 'stroke-dasharray': '3 3' });

var ARROW = [[-1, -3], [1, -3], [1, -1.5], [3.5, -1.5], [3.5, 0], [1.5, 1], [0, 3.5], [-1.5, 1], [-3.5, 0], [-3.5, -1.5]];

function marker(x, y, dir, color) {
    add(markers, 'polygon', {
        points: ARROW.map(function (p) { return (x + p[0]) + ',' + (y + dir * p[1]); }).join(' '),
        fill: color,
        stroke: '#fff',
        'stroke-width': 0.5
    });
}

marker(115, 465, 1, TRADE);
marker(166, 308, -1, BLUE);
marker(598, 312, 1, TRADE);
marker(706, 206, -1, BLUE);
marker(722, 218, 1, TRADE);

// axis ticks
var ticks = document.getElementById('ticks');
[112, 144, 176, 209, 241, 273, 305, 337, 369, 401, 433, 466, 498, 530].forEach(function (ty) {
    line(ticks, 1314, ty + 0.5, 1318, ty + 0.5, '#000');
});
for (var tx = 2; tx <= 834; tx += 64) line(ticks, tx + 0.5, 563, tx + 0.5, 567, '#000');
```
